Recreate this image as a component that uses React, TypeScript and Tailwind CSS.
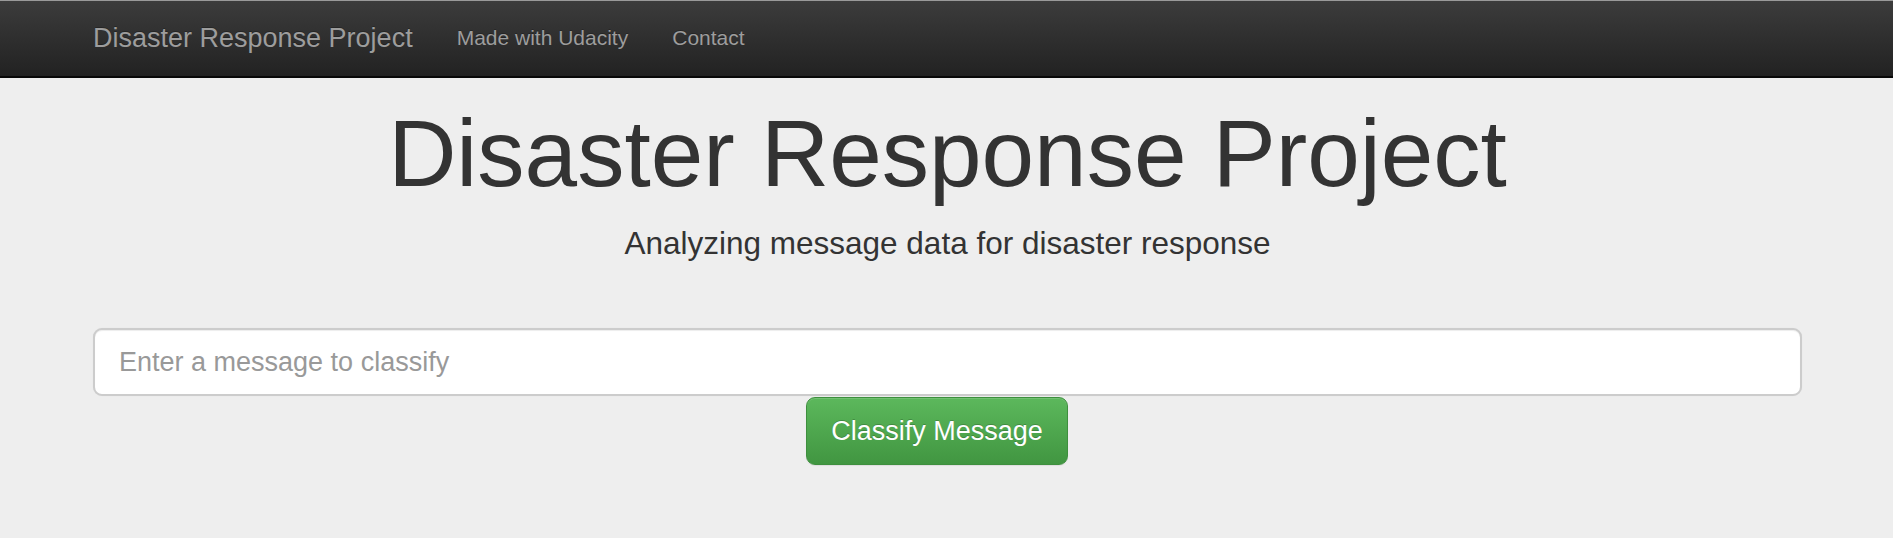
const App = () => {
  return (
    <div className="min-h-[538px] bg-[#eeeeee] font-['Liberation_Sans',Arial,sans-serif] text-[#333333]">
      <nav className="h-[78px] border-t border-t-[#9a9a9a] border-b-2 border-b-[#080808] bg-gradient-to-b from-[#3c3c3c] to-[#222222]">
        <div className="mx-auto flex w-[1755px] pl-[24px] pr-[22px]">
          <a
            href="#"
            className="pt-[22px] pb-[22px] pr-[22px] text-[27px] leading-[30px] text-[#9d9d9d] [text-shadow:0_-1px_0_rgba(0,0,0,0.25)]"
          >
            Disaster Response Project
          </a>
          <a
            href="#"
            className="px-[22px] pt-[22px] pb-[22px] text-[21px] leading-[30px] text-[#9d9d9d] [text-shadow:0_-1px_0_rgba(0,0,0,0.25)]"
          >
            Made with Udacity
          </a>
          <a
            href="#"
            className="px-[22px] pt-[22px] pb-[22px] text-[21px] leading-[30px] text-[#9d9d9d] [text-shadow:0_-1px_0_rgba(0,0,0,0.25)]"
          >
            Contact
          </a>
        </div>
      </nav>

      <div className="mx-auto w-[1755px] pl-[24px] pr-[22px] pt-[23px] pb-[40px]">
        <h1 className="text-center text-[94.5px] leading-[104px] font-normal">
          Disaster Response Project
        </h1>
        <p className="mt-[16px] text-center text-[31.5px] leading-[45px]">
          Analyzing message data for disaster response
        </p>

        <div className="mt-[62px]">
          <input
            type="text"
            placeholder="Enter a message to classify"
            className="block h-[68px] w-full rounded-[9px] border-2 border-[#cccccc] bg-white px-[24px] text-[27px] text-[#555555] shadow-[inset_0_1px_1px_rgba(0,0,0,0.075),0_0_1px_rgba(0,0,0,0.08)] outline-none placeholder:text-[#999999]"
          />
          <div className="flex justify-center">
            <button
              type="button"
              className="mr-[21px] mt-px h-[68px] rounded-[9px] border-[1.5px] border-[#3e8f3e] bg-gradient-to-b from-[#5cb85c] to-[#419641] px-[24px] text-[27px] leading-[36px] text-white shadow-[inset_0_1px_0_rgba(255,255,255,0.15),0_1px_1px_rgba(0,0,0,0.075)] [text-shadow:0_-1px_0_rgba(0,0,0,0.2)]"
            >
              Classify Message
            </button>
          </div>
        </div>
      </div>
    </div>
  );
};

export default App;
